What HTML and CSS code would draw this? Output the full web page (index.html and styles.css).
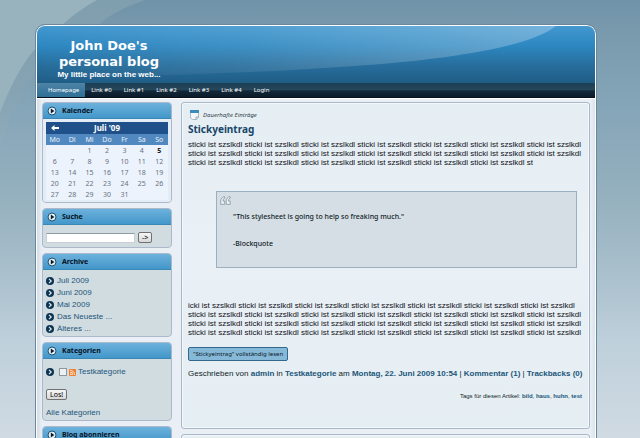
FILE: index.html
```html
<!DOCTYPE html>
<html lang="de">
<head>
<meta charset="utf-8">
<title>John Doe's personal blog</title>
<link rel="stylesheet" href="styles.css">
</head>
<body>
<svg class="swirl" width="150" height="160" viewBox="0 0 150 160" aria-hidden="true">
  <defs><linearGradient id="fade" x1="0" y1="0" x2="0" y2="1">
    <stop offset="0" stop-color="#7f9eae"/>
    <stop offset=".6" stop-color="#85a3b3"/>
    <stop offset="1" stop-color="#8eacbb"/>
  </linearGradient></defs>
  <path d="M0 0H145C122 8 108 16 98 25C66 45 48 60 35 75C20 94 8 122 0 150Z" fill="url(#fade)"/>
  <path d="M0 0H97C84 7 72 16 62 25C52 33 43 41 35 49C20 66 8 92 0 113Z" fill="#98b3be"/>
</svg>
<svg hidden>
  <symbol id="play" viewBox="0 0 10 10">
    <circle cx="5" cy="5" r="4" fill="#e4eef3" stroke="#1d5372" stroke-width="1"/>
    <path d="M3.8 2.6L7.4 5L3.8 7.4Z" fill="#0a1c2b"/>
  </symbol>
  <symbol id="bullet" viewBox="0 0 8 8">
    <circle cx="4" cy="4" r="4" fill="#0c3453"/>
    <path d="M3 1.9L5.2 4L3 6.1" fill="none" stroke="#e3edf2" stroke-width="1.2"/>
  </symbol>
</svg>
<div class="page">
  <header class="banner">
    <svg class="gloss" viewBox="0 0 556 57" preserveAspectRatio="none" aria-hidden="true">
      <defs><linearGradient id="shine" x1="0" y1="0" x2="1" y2="0">
        <stop offset="0" stop-color="#fff" stop-opacity="0"/>
        <stop offset=".4" stop-color="#fff" stop-opacity=".08"/>
        <stop offset="1" stop-color="#fff" stop-opacity=".27"/>
      </linearGradient></defs>
      <path d="M0 0H517C490 22 400 35 300 41C220 47 100 50 0 52Z" fill="url(#shine)"/>
    </svg>
    <div class="brand">
      <h1>John Doe's personal blog</h1>
      <p>My little place on the web...</p>
    </div>
  </header>
  <nav class="nav">
    <a class="current" href="#">Homepage</a>
    <a href="#">Link #0</a>
    <a href="#">Link #1</a>
    <a href="#">Link #2</a>
    <a href="#">Link #3</a>
    <a href="#">Link #4</a>
    <a href="#">Login</a>
  </nav>
  <div class="columns">
    <aside class="sidebar">
      <section class="panel">
        <h2><svg class="play"><use href="#play"/></svg>Kalender</h2>
        <div class="calendar-body">
          <table class="calendar">
            <thead>
              <tr class="month">
                <th><a href="#" aria-label="Zurück"><svg class="back" viewBox="0 0 8 6"><path d="M0 3L3.5 0V2H8V4H3.5V6Z" fill="#fff"/></svg></a></th>
                <th colspan="5">Juli '09</th>
                <th></th>
              </tr>
              <tr class="days"><th>Mo</th><th>Di</th><th>Mi</th><th>Do</th><th>Fr</th><th>Sa</th><th>So</th></tr>
            </thead>
            <tbody>
              <tr><td></td><td></td><td>1</td><td>2</td><td>3</td><td>4</td><td class="today">5</td></tr>
              <tr><td>6</td><td>7</td><td>8</td><td>9</td><td>10</td><td>11</td><td>12</td></tr>
              <tr><td>13</td><td>14</td><td>15</td><td>16</td><td>17</td><td>18</td><td>19</td></tr>
              <tr><td>20</td><td>21</td><td>22</td><td>23</td><td>24</td><td>25</td><td>26</td></tr>
              <tr><td>27</td><td>28</td><td>29</td><td>30</td><td>31</td><td></td><td></td></tr>
            </tbody>
          </table>
        </div>
      </section>
      <section class="panel">
        <h2><svg class="play"><use href="#play"/></svg>Suche</h2>
        <form class="search">
          <input type="text" aria-label="Suche">
          <button type="button">-&gt;</button>
        </form>
      </section>
      <section class="panel">
        <h2><svg class="play"><use href="#play"/></svg>Archive</h2>
        <ul class="links">
          <li><svg class="bullet"><use href="#bullet"/></svg><a href="#">Juli 2009</a></li>
          <li><svg class="bullet"><use href="#bullet"/></svg><a href="#">Juni 2009</a></li>
          <li><svg class="bullet"><use href="#bullet"/></svg><a href="#">Mai 2009</a></li>
          <li><svg class="bullet"><use href="#bullet"/></svg><a href="#">Das Neueste ...</a></li>
          <li><svg class="bullet"><use href="#bullet"/></svg><a href="#">Älteres ...</a></li>
        </ul>
      </section>
      <section class="panel">
        <h2><svg class="play"><use href="#play"/></svg>Kategorien</h2>
        <form class="categories">
          <div class="category">
            <svg class="bullet"><use href="#bullet"/></svg>
            <input type="checkbox" aria-label="Testkategorie">
            <svg class="feed" viewBox="0 0 7 7"><rect width="7" height="7" rx="1" fill="#ee7f2d"/><circle cx="1.9" cy="5.2" r=".8" fill="#fff"/><path d="M1.2 3.2A2.6 2.6 0 0 1 3.9 5.9M1.2 1.4A4.5 4.5 0 0 1 5.7 5.9" fill="none" stroke="#fff" stroke-width=".8"/></svg>
            <a href="#">Testkategorie</a>
          </div>
          <button type="button">Los!</button>
          <a class="all" href="#">Alle Kategorien</a>
        </form>
      </section>
      <section class="panel">
        <h2><svg class="play"><use href="#play"/></svg>Blog abonnieren</h2>
      </section>
    </aside>
    <main class="content">
      <article class="entry">
        <p class="sticky"><svg class="note" viewBox="0 0 9 10"><path d="M.5 1H8.5V7.5L6.5 9.5H2.5L.5 8Z" fill="#f4f8fa" stroke="#9aabb8" stroke-width=".8"/><path d="M0 0H9V3H0Z" fill="#3b8cba"/><path d="M8.5 7H6V9.5" fill="none" stroke="#8296a5" stroke-width=".8"/></svg>Dauerhafte Einträge</p>
        <h2>Stickyeintrag</h2>
        <p class="text">sticki ist szslkdl sticki ist szslkdl sticki ist szslkdl sticki ist szslkdl sticki ist szslkdl sticki ist szslkdl sticki ist szslkdl sticki ist szslkdl sticki ist szslkdl sticki ist szslkdl sticki ist szslkdl sticki ist szslkdl sticki ist szslkdl sticki ist szslkdl sticki ist szslkdl sticki ist szslkdl sticki ist szslkdl sticki ist szslkdl sticki ist szslkdl sticki ist szslkdl st</p>
        <blockquote>
          <svg class="quote" viewBox="0 0 11 9"><path d="M4.5 .5C2 1 .7 3 .7 5V8.4H4.7V5H3C3 3.5 3.5 2.4 4.8 2ZM10 .5C7.5 1 6.2 3 6.2 5V8.4H10.2V5H8.5C8.5 3.5 9 2.4 10.3 2Z" fill="#e8eff3" stroke="#8797a3" stroke-width=".8"/></svg>
          <p>"This stylesheet is going to help so freaking much."</p>
          <p>-Blockquote</p>
        </blockquote>
        <p class="text">icki ist szslkdl sticki ist szslkdl sticki ist szslkdl sticki ist szslkdl sticki ist szslkdl sticki ist szslkdl sticki ist szslkdl<br>sticki ist szslkdl sticki ist szslkdl sticki ist szslkdl sticki ist szslkdl sticki ist szslkdl sticki ist szslkdl sticki ist szslkdl sticki ist szslkdl sticki ist szslkdl sticki ist szslkdl sticki ist szslkdl sticki ist szslkdl sticki ist szslkdl sticki ist szslkdl sticki ist szslkdl sticki ist szslkdl sticki ist szslkdl sticki ist szslkdl sticki ist szslkdl sticki ist szslkdl sticki ist szslkdl</p>
        <a class="more" href="#">"Stickyeintrag" vollständig lesen</a>
        <p class="meta">Geschrieben von <a href="#">admin</a> in <a href="#">Testkategorie</a> am <a href="#">Montag, 22. Juni 2009 10:54</a> | <a href="#">Kommentar (1)</a> | <a href="#">Trackbacks (0)</a></p>
        <p class="tags">Tags für diesen Artikel: <a href="#">bild</a>, <a href="#">haus</a>, <a href="#">huhn</a>, <a href="#">test</a></p>
      </article>
      <article class="entry"></article>
    </main>
  </div>
</div>
</body>
</html>
```
FILE: styles.css
```css
* { box-sizing: border-box; }
[hidden] { display: none !important; }

html { height: 100%; }

body {
  margin: 0;
  height: 100vh;
  overflow: hidden;
  padding: 25px 44px 0 36px;
  background: linear-gradient(#7093a9 0, #7898ac 6%, #85a5b8 25%, #97b2bf 47%, #a9bfcc 62%, #bed0db 78%, #d0dae3 100%);
  font-family: "Liberation Sans", Arial, sans-serif;
  font-size: 8px;
  line-height: 12px;
  color: #111c28;
}

h1, h2, p, ul, blockquote { margin: 0; padding: 0; }
a { color: #1c5679; text-decoration: none; }
svg { display: block; flex: none; }

.swirl { position: absolute; left: 0; top: 0; z-index: -1; }

.page {
  min-height: 100vh;
  border: 2px solid #fbfdfe;
  border-width: 1px 1px 0;
  border-radius: 9px 9px 0 0;
  outline: 1px solid #6b8799;
  background: linear-gradient(90deg, #d3dde6, #e9eff5 5px, #e9eff5 calc(100% - 5px), #dbe4ec);
  overflow: hidden;
}

.banner {
  position: relative;
  height: 57px;
  padding: 12px 0 0 11px;
  background: linear-gradient(#4398cf, #2d87c0 35%, #276d9c 70%, #205d86);
}
.gloss { position: absolute; inset: 0; width: 100%; height: 100%; }
.brand { position: relative; width: 122px; text-align: center; color: #fff; }
.brand h1 { font: 700 13px/16px "DejaVu Sans", sans-serif; }
.brand p { font-size: 8px; line-height: 10px; font-weight: 700; }

.nav {
  display: flex;
  height: 15px;
  background: linear-gradient(#1b3f56 0, #27475a 50%, #132a3b 55%, #0b1b29 100%);
  border-bottom: 1px solid #06111b;
  font-family: "Noto Sans", sans-serif;
}
.nav a { padding: 0 6px; font-size: 6px; line-height: 15px; color: #fff; }
.nav .current { padding-left: 11px; background: linear-gradient(#4d83a6, #2f6f96); }

.columns { display: flex; gap: 9px; padding: 3px 5px 0 5px; border-top: 1px solid #fff; }
.sidebar { width: 130px; flex: none; display: flex; flex-direction: column; gap: 5px; }

.panel {
  background: #d1dce1;
  border: 1px solid #abb9cb;
  border-radius: 4px;
  overflow: hidden;
}
.panel h2 {
  display: flex;
  align-items: center;
  gap: 5px;
  height: 16px;
  padding-left: 4px;
  border-bottom: 1px solid #3b88b7;
  background: linear-gradient(#6db1dc, #4397ca);
  font-family: "Noto Sans", sans-serif;
  font-size: 7px;
  color: #06121f;
}
.play { width: 10px; height: 10px; }
.bullet { width: 8px; height: 8px; }

.calendar-body { padding: 3px 3px 2px; background: #e4ecf5; }
.calendar { width: 100%; border-collapse: collapse; table-layout: fixed; background: #edf3fd; font-family: "Noto Sans", sans-serif; }
.calendar th, .calendar td { padding: 0; height: 11px; text-align: center; font-size: 7px; line-height: 10px; color: #66727e; }
.calendar .month th { height: 12px; background: #1f5089; color: #fff; font-size: 8px; }
.calendar .days th { background: #5288c0; color: #e7f0fa; font-weight: 400; }
.calendar .today { font-weight: 700; color: #222; }
.back { width: 8px; height: 6px; margin: 0 auto; }

.search { display: flex; align-items: center; gap: 3px; padding: 7px 3px 4px; }
.search input { width: 89px; height: 10px; padding: 0 2px; border: 1px solid #c9d1d6; border-top-color: #8e9aa2; background: #fff; font-size: 7px; }
button {
  padding: 0 3px;
  height: 11px;
  border: 1px solid #707070;
  border-radius: 2px;
  background: linear-gradient(#f6f6f6, #d8d8d8);
  font: 7px/8px "Noto Sans", sans-serif;
  color: #000;
}

.links { padding: 5px 3px 1px; list-style: none; }
.links li { display: flex; align-items: center; gap: 3px; height: 12px; }

.categories { display: flex; flex-direction: column; align-items: flex-start; padding: 7px 3px 1px; }
.category { display: flex; align-items: center; gap: 2px; margin-bottom: 11px; }
.category input { appearance: none; margin: 0 0 0 3px; width: 8px; height: 8px; border: 1px solid #8d989f; background: #eef0f1; }
.feed { width: 7px; height: 7px; }
.all { margin-top: 7px; }

.content { flex: 1; min-width: 0; display: flex; flex-direction: column; gap: 5px; }
.entry {
  min-height: 40px;
  padding: 7px 6px 26px;
  border: 1px solid #a9b8c9;
  border-radius: 3px;
  box-shadow: inset 0 0 0 1px #f3f8fb;
  background: linear-gradient(#e5eef2, #e9f0f6 45%, #e5eef2);
}
.sticky { display: flex; align-items: center; gap: 4px; padding-left: 2px; font-family: "Noto Sans", sans-serif; font-size: 6px; line-height: 10px; font-style: italic; color: #333f4a; }
.note { width: 9px; height: 10px; }
.entry h2 { margin-top: 2px; font-family: "Noto Sans", sans-serif; font-size: 10px; line-height: 14px; color: #174568; }
.text { margin-top: 4px; line-height: 9px; color: #101018; }
blockquote {
  margin: 24px 6px 33px 28px;
  padding: 4px 3px 17px;
  border: 1px solid #9cafbe;
  background: #d4dee4;
  font-family: "Noto Sans", sans-serif;
}
.quote { width: 11px; height: 9px; }
blockquote p { margin: 6px 0 0 13px; font-size: 7px; font-weight: 500; }
blockquote p + p { margin-top: 15px; }
.more {
  display: inline-block;
  margin-top: 10px;
  padding: 0 4px;
  border: 1px solid #32688c;
  border-radius: 2px;
  background: #86b8d8;
  font-family: "Noto Sans", sans-serif;
  font-size: 6px;
  color: #0a1826;
}
.meta { margin-top: 7px; }
.meta a, .tags a { font-weight: 700; }
.tags { margin-top: 10px; padding-right: 1px; font-size: 6px; text-align: right; }
```
